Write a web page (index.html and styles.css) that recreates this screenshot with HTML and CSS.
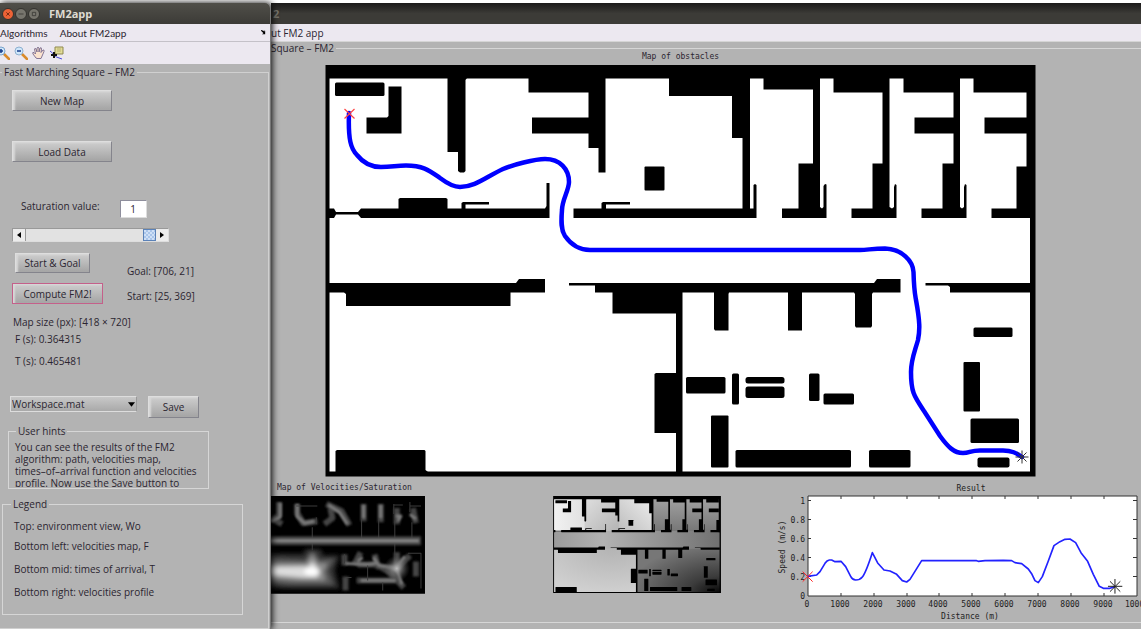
FILE: index.html
```html
<!DOCTYPE html>
<html lang="en">
<head>
<meta charset="utf-8">
<title>FM2app</title>
<link rel="stylesheet" href="styles.css">
</head>
<body>
<main class="desktop">
  <section class="window app">
    <header class="titlebar">
      <button class="wbtn close" aria-label="Close"><svg viewBox="0 0 12 12"><path d="M4 4l4 4M8 4l-4 4"/></svg></button>
      <button class="wbtn" aria-label="Minimize"><svg viewBox="0 0 12 12"><path d="M3 6h6"/></svg></button>
      <button class="wbtn" aria-label="Maximize"><svg viewBox="0 0 12 12"><path d="M4 4h4v4h-4z"/></svg></button>
      <h1>FM2app</h1>
    </header>
    <nav class="menubar">
      <a href="#algorithms">Algorithms</a>
      <a href="#about">About FM2app</a>
      <svg class="dock" viewBox="0 0 6 6"><path d="M0 0L3 1L4 2V0.500L5 1V5H1L3 4L0 1Z"/></svg>
    </nav>
    <div class="toolbar">
      <button class="tool" aria-label="Zoom in"><svg viewBox="0 0 14 14"><path d="M8 8l5 5" stroke="#d98a2b" stroke-width="2.500" stroke-linecap="round"/><circle cx="5" cy="5" r="4" fill="#cfe6fa" stroke="#7aa3cc"/><path d="M3 5h4M5 3v4" stroke="#173c8c" stroke-width="1.500"/></svg></button>
      <button class="tool" aria-label="Zoom out"><svg viewBox="0 0 14 14"><path d="M8 8l5 5" stroke="#d98a2b" stroke-width="2.500" stroke-linecap="round"/><circle cx="5" cy="5" r="4" fill="#cfe6fa" stroke="#8fb0d0"/><path d="M3 5h4" stroke="#173c8c" stroke-width="1.500"/></svg></button>
      <button class="tool" aria-label="Pan"><svg viewBox="0 0 14 14"><path d="M4 12L1 8Q0 6 2 6.500L3.500 8L2.500 3Q3 1.500 4 3L5 6V2Q6 .5 7 2V6L8 2Q9.500 1 9.500 3L9 6.500L11 4Q12.500 3.500 12 5.500L10.500 9L9 12.500H5Z" fill="#fbe3cf" stroke="#77698c" stroke-width=".9"/></svg></button>
      <button class="tool" aria-label="Data cursor"><svg viewBox="0 0 14 14"><path d="M0 5Q3 7 4 9T12 13" fill="none" stroke="#4848dd"/><path d="M5 1h8v7H5z" fill="#e2dc98" stroke="#8f894e"/><path d="M7 3h4M7 5h4" stroke="#b9b274"/><path d="M4 6v6M1 9h6" stroke="#111" stroke-width="2"/></svg></button>
    </div>
    <form class="client">
      <fieldset class="main-panel">
        <legend>Fast Marching Square – FM2</legend>
        <button type="button" class="btn wide">New Map</button>
        <button type="button" class="btn wide load">Load Data</button>
        <div class="saturation">
          <label for="sat">Saturation value:</label>
          <input id="sat" class="num" type="text" value="1">
        </div>
        <div class="slider">
          <button type="button" aria-label="Decrease"><svg viewBox="0 0 6 8"><path d="M5 1v6L1 4z"/></svg></button>
          <input type="range" min="0" max="1" step="0.01" value="1" aria-label="Saturation">
          <button type="button" aria-label="Increase"><svg viewBox="0 0 6 8"><path d="M1 1v6l4-3z"/></svg></button>
        </div>
        <div class="compute">
          <div class="actions">
            <button type="button" class="btn pick">Start &amp; Goal</button>
            <button type="button" class="btn run">Compute FM2!</button>
          </div>
          <div class="points"><p>Goal: [706, 21]</p><p>Start: [25, 369]</p></div>
        </div>
        <div class="stats">
          <p>Map size (px): [418 × 720]</p>
          <p class="sub">F (s): 0.364315</p>
          <p class="sub time">T (s): 0.465481</p>
        </div>
        <div class="saving">
          <div class="picker">
            <select aria-label="Output file"><option>Workspace.mat</option></select>
            <svg viewBox="0 0 8 5"><path d="M0 0h8L4 5z"/></svg>
          </div>
          <button type="button" class="btn save">Save</button>
        </div>
        <fieldset class="group hints">
          <legend>User hints</legend>
          <p>You can see the results of the FM2<br>algorithm: path, velocities map,<br>times–of–arrival function and velocities<br>profile. Now use the Save button to</p>
        </fieldset>
        <fieldset class="group legend-box">
          <legend>Legend</legend>
          <p>Top: environment view, Wo</p>
          <p>Bottom left: velocities map, F</p>
          <p>Bottom mid: times of arrival, T</p>
          <p>Bottom right: velocities profile</p>
        </fieldset>
      </fieldset>
    </form>
  </section>

  <section class="window figure">
    <header class="titlebar"><h2>2</h2></header>
    <nav class="menubar"><a href="#about-app">ut FM2 app</a></nav>
    <fieldset class="plots">
      <legend>Square – FM2</legend>
      <figure class="map">
        <figcaption>Map of obstacles</figcaption>
        <svg viewBox="325 65 711 412">
          <defs>
            <g id="walls">
              <path d="M325.500 65H1035.500V476.500H325.500ZM329.500 78.500V471.500H1030V218H1026.500V78.500Z" fill-rule="evenodd"/>
              <path d="M447.500 78V152H458V171L460 172.500H464L465.500 171V80L467 78ZM528.500 78V92.500H588.500V117.500H532V133.500H588.500V148H598.500V172.500H605.500V78ZM669 78V96H732V138H742.500V209H750V78ZM763.500 78V89.500H813V163.500H798.500V208.500H782V218H826.500V184.500L825 184L823.500 186V207L822 208.500L820 207V78ZM833.500 78V92.500H882.500V163.500H872.500V208.500H851.500V218H896.500V185L895 184L894 187V207L892 208.500L889.500 207V78ZM903.500 78V92.500H953.500V117.500H914.500V133.500H953.500V163.500H942.500V208.500H921.500V218H966.500V185L965 184L964 187V207L962 208.500L960 207V78ZM973.500 78V92.500H1027V78ZM984.500 117.500V133.500H1027V117.500ZM1027 166.500H1016.500V208.500H991.500V218H1031V166.500Z"/>
              <path d="M329 208.500H334L336 212H358L361 208.500H398.500V199L400 198H446L447.500 199V208.500H461.500V203L463 202H489V204.500H465.500V208.500H545L546.500 206V183H549.500V218H361L358 214.500H336L334 218H329ZM573.500 208.500H601.500V203L603 202H630V204.500H606V208.500H753.500V185L755 184L756.500 185V218H573.500Z"/>
              <path d="M329 283H516L519 279H545V292.500H510.500V306H346V294L344 292.500H329ZM569 283H874L877 279H900.500V292.500H873L872 294V326L871 327.500H856L855 326V294L854 292.500H802V330.500H788V292.500H729L728.500 294V330.500H715L714 329V292.500H682.500V473H676V433H654.500V374L656 373H676V313.500H612.500V292.500H595V285.500H569ZM925.500 283H1031V292.500H950V287L948 285.500H925.500ZM335.500 472V451L337 450H424.500L425.500 451V470L428 472Z"/>
              <path d="M388.500 86.500H401.500V133.500H366.500V117.500H387L388.500 116Z"/>
              <g>
                <rect x="335" y="82.500" width="49.500" height="13.500" rx="1.500"/><rect x="644.500" y="166.500" width="20" height="24" rx="1"/>
                <rect x="973.500" y="327.500" width="39" height="9.500" rx="1.500"/><rect x="963.500" y="362" width="16.500" height="49.500" rx="1"/>
                <rect x="970.500" y="418.500" width="48.500" height="24.500" rx="1.500"/><rect x="977.500" y="457.500" width="32" height="10" rx="2"/>
                <rect x="686" y="377" width="39.500" height="16.500" rx="1.500"/><rect x="732" y="373.500" width="7" height="31" rx="1.500"/>
                <rect x="745.500" y="377" width="39" height="6.500" rx="2.500"/><rect x="745.500" y="386.500" width="39" height="11.500" rx="2.500"/>
                <rect x="809" y="373.500" width="10.500" height="27.500" rx="1.500"/><rect x="823.500" y="393.500" width="30.500" height="11" rx="1.500"/>
                <rect x="711" y="415.500" width="17.500" height="52" rx="1"/><rect x="735.500" y="450" width="115.500" height="17.500" rx="1.500"/>
                <rect x="869" y="450" width="41.500" height="17.500" rx="1.500"/>
              </g>
            </g>
          </defs>
          <path d="M327 67H1034V475H327Z" fill="#fff"/>
          <use href="#walls"/>
          <path class="route" d="M349 113C348 140 351 149 357 155C364 164 372 167 381 167C392 167 396 165.500 406 165.500C424 165.500 430 171 440 178C448 184 454 187 460 187C475 187 486 177 503 169C512 165 535 159 545 159C560 159 569 169 569 182C569 190 562 200 562 210C561 222 561 230 565 236C572 246 580 250 590 250L750 250L860 250C868 250 872 248.500 885 248.500C902 249 913 261 913.500 272C914 290 914 289 916 300C920 322 920 330 918 340C914 354 911 360 911 372C911 392 914 396 924 411L940 436C948 447 954 453 963 453C970 453 970 450.500 980 450.500L1003 450.500C1012 450.500 1016 453 1022 457"/>
          <path d="M344.500 109L354.500 118.500M354.500 109L344.500 118.500" fill="none" stroke="#f44" stroke-width="1.200"/>
          <path d="M1015.500 457H1028.500M1022 450.500V463.500M1017.500 452.500L1026.500 461.500M1026.500 452.500L1017.500 461.500" stroke="#333"/>
        </svg>
      </figure>
      <div class="results">
        <figure class="velocity">
          <figcaption>Map of Velocities/Saturation</figcaption>
          <svg viewBox="272 496 153 97">
            <defs>
              <filter id="soft" filterUnits="userSpaceOnUse" x="260" y="490" width="180" height="110"><feGaussianBlur stdDeviation="1.300"/></filter>
              <filter id="softer" filterUnits="userSpaceOnUse" x="255" y="490" width="180" height="110"><feGaussianBlur stdDeviation="2.200"/></filter>
              <radialGradient id="glow"><stop offset="0" stop-color="#bbb"/><stop offset=".45" stop-color="#888" stop-opacity=".6"/><stop offset="1" stop-color="#555" stop-opacity="0"/></radialGradient>
            </defs>
            <path d="M272 496H425V593H272Z"/>
            <g filter="url(#softer)">
              <path d="M260 553L304 554L306 549H321L324 555L340 555L335 570L340 588H284L260 585Z" fill="#333"/>
              <path d="M260 558L306 560L313 550L320 560L335 558L328 570L334 584H290L260 580Z" fill="#5c5c5c"/>
              <path d="M260 563L307 563L313 554L319 563L328 563L324 571L326 580H297L260 577Z" fill="#909090"/>
              <path d="M260 567L309 566L313 561L318 567L321 571L318 577H304L260 573Z" fill="#ddd"/>
              <ellipse cx="312" cy="571" rx="7" ry="4" fill="#fff"/>
            </g>
            <g class="ridges faint" filter="url(#soft)">
              <path d="M280 502V515L273 521M272 518L283 524M298 504V513L304 523L318 521M327 504L342 511L350 525M331 508L333 518L325 524M364 504V521M381 504V522M397 508V524M413 508L416 523M345 554V565M355 564L361 552M375 554L378 566L397 568L410 555M346 576V590M357 580H400M416 561V576M358 564H377L390 572L404 587M397 552V568"/>
            </g>
            <g class="ridges mid" filter="url(#soft)">
              <path d="M281 503V517L272 521M298 504V516L305 523L315 521M329 505L340 512L348 524M364 505V518M381 505V518M396 516H401L398 521M410 514L416 519M358 561L363 557M374 557L379 565L396 568L405 556M397 569L402 584M346 563L368 564L376 563M361 580H396"/>
            </g>
            <g class="ridges fine"><path d="M297 506H318M313 527V550M362 518V540M379 518V540M395 520V560M412 522V540M394 504V514M394 505H403M410 502V512M410 506H421M317 517V524M345 554V563M346 577H352M368 565V580M383 582V590M408 553H421V588"/></g>
            <path d="M260 540.500H421" stroke="#444" stroke-width="9" filter="url(#soft)"/>
            <path d="M260 540.500H419" stroke="#8a8a8a" stroke-width="3" filter="url(#soft)"/>
            <circle cx="397" cy="568" r="13" fill="url(#glow)"/>
          </svg>
        </figure>
        <figure class="arrival">
          <svg viewBox="325 65 711 412" aria-label="Times of arrival">
            <defs>
              <linearGradient id="hall"><stop offset="0" stop-color="#9a9a9a"/><stop offset=".3" stop-color="#b2b2b2"/><stop offset="1" stop-color="#707070"/></linearGradient>
              <linearGradient id="room"><stop offset="0" stop-color="#f2f2f2"/><stop offset="1" stop-color="#e0e0e0"/></linearGradient>
              <linearGradient id="second" y2="1"><stop offset="0" stop-color="#e0e0e0"/><stop offset="1" stop-color="#b4b4b4"/></linearGradient>
              <linearGradient id="third" x1="0" y1="1" x2="1" y2="0"><stop offset="0" stop-color="#bdbdbd"/><stop offset="1" stop-color="#efefef"/></linearGradient>
              <radialGradient id="hallway" cx=".7" cy="0" r="1"><stop offset="0" stop-color="#b4b4b4"/><stop offset="1" stop-color="#d0d0d0"/></radialGradient>
              <radialGradient id="goal" cx="1" cy="1" r="1.100"><stop offset="0" stop-color="#050505"/><stop offset=".35" stop-color="#3c3c3c"/><stop offset="1" stop-color="#777"/></radialGradient>
              <linearGradient id="cells" x2="0" y2="1"><stop offset="0" stop-color="#a4a4a4"/><stop offset="1" stop-color="#777"/></linearGradient>
            </defs>
            <path d="M326 66H1035V476H326Z" fill="url(#hall)"/>
            <path d="M326 66H460V213H326Z" fill="url(#room)"/>
            <path d="M460 66H602V213H460Z" fill="url(#second)"/>
            <path d="M602 66H746V213H602Z" fill="url(#third)"/>
            <path d="M746 66H1035V213H746Z" fill="url(#cells)"/>
            <path d="M326 288H679V476H326Z" fill="url(#hallway)"/>
            <path d="M679 288H1035V476H679Z" fill="url(#goal)"/>
            <use href="#walls"/>
          </svg>
        </figure>
        <figure class="profile">
          <svg viewBox="775 483 366 138" aria-label="Velocities profile">
            <path d="M808 496H1137V596H808Z" fill="#fff" stroke="#333"/>
            <path d="M841 596v-3M874 596v-3M907 596v-3M939 596v-3M972 596v-3M1005 596v-3M1038 596v-3M1071 596v-3M1104 596v-3M841 496v3M874 496v3M907 496v3M939 496v3M972 496v3M1005 496v3M1038 496v3M1071 496v3M1104 496v3M808 500.500h3M808 519.500h3M808 538.500h3M808 557.500h3M808 576.500h3M1137 500.500h-4M1137 519.500h-4M1137 538.500h-4M1137 557.500h-4M1137 576.500h-4" stroke="#333"/>
            <g class="axis-text">
              <text x="971" y="491">Result</text>
              <text x="970" y="619">Distance (m)</text>
              <text transform="translate(785 547) rotate(-90)">Speed (m/s)</text>
              <g class="yticks"><text x="805" y="504">1</text><text x="805" y="523">0.8</text><text x="805" y="542">0.6</text><text x="805" y="561">0.4</text><text x="805" y="580">0.2</text><text x="805" y="599">0</text></g>
              <text x="807" y="607">0</text><text x="840" y="607">1000</text><text x="873" y="607">2000</text><text x="906" y="607">3000</text><text x="938" y="607">4000</text><text x="971" y="607">5000</text><text x="1004" y="607">6000</text><text x="1037" y="607">7000</text><text x="1070" y="607">8000</text><text x="1103" y="607">9000</text><text x="1137" y="607">10000</text>
            </g>
            <g transform="translate(765 475) scale(.3333)">
              <path class="curve" d="M128 304L155 300L165 290L180 265Q186 256 193 255L200 255L210 260L228 259L242 275L257 304Q262 314 272 315Q285 315 292 306Q303 292 322 233L338 264L357 285L375 288L395 298L412 317L425 321L435 313L470 257H635L640 259L660 257L715 256L740 257L750 263L770 266L790 282L801 298L810 317L820 323L832 305L850 258L867 212L885 200L900 193L915 192L932 203L948 233L968 259L985 298L1003 334L1015 340L1035 340L1050 335"/>
              <path d="M113 290L143 320M143 290L113 320" stroke="#f22" stroke-width="3"/>
              <path d="M1029 334H1072M1050 312V356M1035 319L1066 350M1066 319L1035 350" stroke="#222" stroke-width="3"/>
            </g>
          </svg>
        </figure>
      </div>
    </fieldset>
  </section>
</main>
</body>
</html>
```
FILE: styles.css
```css
* { box-sizing: border-box; }
body {
  margin: 0;
  background: #fff;
  color: #2b2530;
  font: 10px/12px "Open Sans", "Noto Sans", sans-serif;
  overflow: hidden;
}
p, h1, h2, figure { margin: 0; }
button, input, select { font: inherit; color: inherit; margin: 0; padding: 0; border: 0; }
svg { display: block; fill: #000; }
a { color: inherit; text-decoration: none; }

.desktop { display: flex; min-height: 100vh; padding-top: 3px; }
.window { background: #b3b3b3; display: flex; flex-direction: column; }
.app {
  flex: 0 0 271px;
  z-index: 1;
  box-shadow: 1px 0 7px #000;
  border-right: 1px solid #777;
  border-radius: 0 5px 0 0;
}
.figure { flex: 1; min-width: 0; overflow: hidden; }

.titlebar {
  display: flex;
  align-items: center;
  height: 21px;
  background: linear-gradient(#504f49, #3c3b37);
}
.app .titlebar { border-radius: 0 5px 0 0; padding-left: 2px; gap: 1px; }
.figure .titlebar { background: linear-gradient(#1c1b1a, #3c3b37 50%); }
.titlebar h1, .titlebar h2 { font-size: 11px; font-weight: 700; color: #dfdbd2; }
.titlebar h1 { margin-left: 8px; }
.titlebar h2 { color: #77756e; padding-left: 2px; }
.wbtn {
  width: 12px;
  height: 12px;
  border-radius: 50%;
  background: #77756d;
  border: 1px solid #33322e;
}
.wbtn svg { width: 10px; height: 10px; fill: none; stroke: #3a3935; stroke-width: 1; }
.wbtn.close { background: #ee6236; }
.wbtn.close svg { stroke: #64200b; }

.menubar {
  display: flex;
  align-items: center;
  gap: 12px;
  height: 18px;
  background: #ece8f0;
  border-bottom: 1px solid #c4c1c8;
}
.app .menubar { font-family: Lato, "Open Sans", sans-serif; }
.figure .menubar { border-bottom-color: #d5d5d5; }
.dock { width: 5px; height: 5px; margin: 0 4px 0 auto; }

.toolbar {
  display: flex;
  align-items: center;
  gap: 4px;
  height: 22px;
  background: #ece8f0;
}
.tool { width: 14px; height: 14px; background: none; }
.tool:first-child { margin-left: -4px; }
.tool svg { width: 14px; height: 14px; }

.client { flex: 1; display: flex; }
fieldset { min-width: 0; margin: 0; padding: 0; border: 1px solid #d6d6d6; }
legend { padding: 0 2px; }
.main-panel {
  flex: 1;
  margin: 2px 1px 0 0;
  border-left: 0;
  border-color: #d0d0d0;
}
.main-panel > legend { margin-left: 2px; }

.btn {
  display: block;
  height: 21px;
  background: linear-gradient(#cecece, #a4a4a4);
  border: 1px solid;
  border-color: #dedede #84848c #84848c #dedede;
  box-shadow: inset 2px 1px 2px #d8d8d8;
}
.wide { width: 100px; margin: 12px 0 0 12px; }
.load { margin-top: 30px; }
.saturation { display: flex; gap: 20px; margin: 38px 0 0 21px; }
.num {
  width: 27px;
  height: 18px;
  text-align: center;
  background: #fff;
  border: 1px solid;
  border-color: #8e8e9c #ddd #ddd #8e8e9c;
}
.slider {
  display: flex;
  width: 157px;
  height: 14px;
  margin: 10px 0 0 12px;
  border: 1px solid;
  border-color: #999 #ddd #ddd #999;
}
.slider button { width: 12px; background: #ececec; }
.slider svg { width: 6px; height: 8px; margin: auto; }
.slider input {
  flex: 1;
  min-width: 0;
  height: 12px;
  appearance: none;
  background: #e2e2e2;
  border-left: 1px solid #999;
}
.slider input::-webkit-slider-thumb {
  appearance: none;
  width: 13px;
  height: 12px;
  border: 1px solid #5b82b8;
  background: repeating-conic-gradient(#a9c5ea 0 25%, #cfe0f6 0 50%) 0 0 / 4px 4px;
}
.compute { display: flex; gap: 24px; margin: 11px 0 0 12px; }
.actions { display: flex; flex-direction: column; gap: 10px; width: 91px; }
.pick { width: 75px; height: 20px; margin-left: 3px; }
.run { border-color: #c4608a; }
.points { display: flex; flex-direction: column; gap: 13px; padding-top: 12px; }
.stats { margin: 12px 0 0 13px; }
.sub { margin: 5px 0 0 2px; }
.time { margin-top: 10px; }
.saving { display: flex; gap: 11px; margin: 29px 0 0 10px; }
.picker { display: grid; width: 127px; height: 16px; align-items: center; }
.picker select, .picker svg { grid-area: 1 / 1; }
.picker select {
  appearance: none;
  width: 100%;
  height: 16px;
  padding-left: 1px;
  background: linear-gradient(#c8c8c8, #a9a9a9);
  border: 1px solid;
  border-color: #ddd #999 #ddd #ddd;
}
.picker svg { justify-self: end; width: 7px; height: 5px; margin-right: 2px; pointer-events: none; }
.save { width: 51px; height: 22px; }
.hints { width: 201px; margin: 7px 0 0 8px; }
.hints legend { margin-left: 7px; }
.hints p { height: 46px; margin: 4px 0 1px; padding-left: 6px; overflow: hidden; white-space: nowrap; }
.legend-box { width: 241px; margin: 9px 0 0 2px; padding-bottom: 16px; }
.legend-box legend { margin-left: 8px; }
.legend-box p { padding: 0 11px; margin-top: 11px; }
.legend-box legend + p { margin-top: 10px; }
.legend-box p + p { margin-top: 8px; }
.legend-box p + p + p { margin-top: 11px; }

.plots { border-width: 1px 0; margin: 0 0 6px; flex: 1; }
.plots > legend { padding-left: 0; }
figcaption { font: 8px/10px "DejaVu Sans Mono", monospace; }
.map { margin: -2px 105px 0 54px; }
.map figcaption { text-align: center; margin-bottom: 3px; }
.map svg, .results svg { width: 100%; height: auto; }
.route { fill: none; stroke: #00f; stroke-width: 4.5; stroke-linecap: round; }

.results { display: grid; grid-template-columns: 154fr 128fr 168fr 54fr 366fr; margin-top: 6px; }
.velocity { grid-column: 1; }
.velocity figcaption { padding-left: 6px; margin-bottom: 3px; white-space: nowrap; }
.arrival { grid-column: 3; padding-top: 13px; }
.profile { grid-column: 5; }
.ridges { fill: none; stroke-linejoin: round; }
.faint { stroke: #444; stroke-width: 6; }
.mid { stroke: #7c7c7c; stroke-width: 3; }
.fine { stroke: #3c3c3c; stroke-width: 1; }
.curve { fill: none; stroke: #22f; stroke-width: 5; stroke-linejoin: round; }
.axis-text { font: 8px "DejaVu Sans Mono", monospace; text-anchor: middle; fill: #222; }
.axis-text .yticks { text-anchor: end; }
```
